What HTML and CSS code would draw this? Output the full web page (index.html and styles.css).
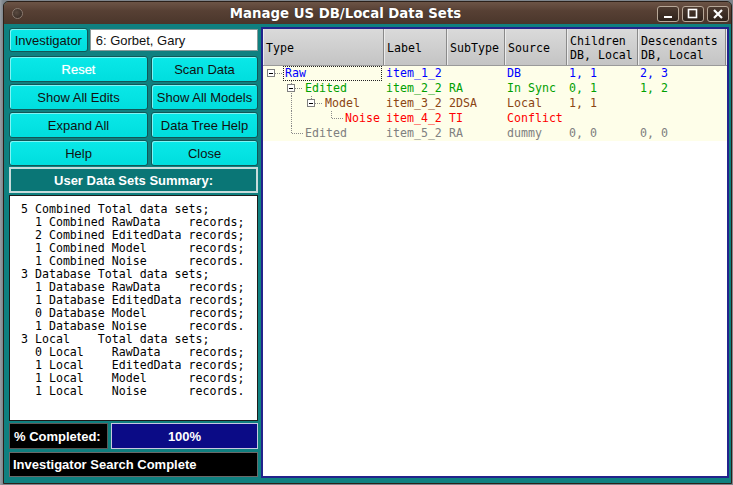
FILE: index.html
```html
<!DOCTYPE html>
<html>
<head>
<meta charset="utf-8">
<title>Manage US DB/Local Data Sets</title>
<link rel="stylesheet" href="styles.css">
</head>
<body>
<div class="window">
  <div class="titlebar">
    <div class="tb-left"><span class="tb-dot"></span></div>
    <div class="tb-title">Manage US DB/Local Data Sets</div>
    <div class="tb-btns">
      <span class="tb-btn"><svg width="22" height="16" viewBox="0 0 22 16"><rect x="7" y="10" width="8" height="2" fill="#fff"/></svg></span>
      <span class="tb-btn"><svg width="22" height="16" viewBox="0 0 22 16"><rect x="6.5" y="3.5" width="8" height="8" fill="none" stroke="#fff" stroke-width="1.6"/></svg></span>
      <span class="tb-btn"><svg width="22" height="16" viewBox="0 0 22 16"><path d="M7 4 L15 12 M15 4 L7 12" stroke="#fff" stroke-width="2.2"/></svg></span>
    </div>
  </div>
  <div class="content">
    <div class="left">
      <div class="inv-row">
        <div class="btn inv">Investigator</div>
        <div class="field">6: Gorbet, Gary</div>
      </div>
      <div class="btn-grid">
        <div class="btn reset">Reset</div>
        <div class="btn">Scan Data</div>
        <div class="btn">Show All Edits</div>
        <div class="btn">Show All Models</div>
        <div class="btn">Expand All</div>
        <div class="btn">Data Tree Help</div>
        <div class="btn">Help</div>
        <div class="btn">Close</div>
      </div>
      <div class="summary-label">User Data Sets Summary:</div>
<pre class="summary">5 Combined Total data sets;
  1 Combined RawData    records;
  2 Combined EditedData records;
  1 Combined Model      records;
  1 Combined Noise      records.
3 Database Total data sets;
  1 Database RawData    records;
  1 Database EditedData records;
  0 Database Model      records;
  1 Database Noise      records.
3 Local    Total data sets;
  0 Local    RawData    records;
  1 Local    EditedData records;
  1 Local    Model      records;
  1 Local    Noise      records.</pre>
      <div class="progress-row">
        <div class="prog-label">% Completed:</div>
        <div class="prog-bar">100%</div>
      </div>
      <div class="status">Investigator Search Complete</div>
    </div>
    <div class="tree">
      <div class="thead">
        <div class="th">Type</div>
        <div class="th">Label</div>
        <div class="th">SubType</div>
        <div class="th">Source</div>
        <div class="th two">Children<br>DB, Local</div>
        <div class="th two">Descendants<br>DB, Local</div>
        <div class="th last"></div>
      </div>
      <div class="tbody">
        <div class="trow c-raw">
          <div class="tcell type">
            <svg class="branch" width="20" height="15" viewBox="0 0 20 15">
              <path d="M12 7.5 H20" class="dot"/>
              <rect x="4.5" y="3.5" width="7" height="7" fill="#fff" stroke="#808080"/>
              <path d="M6 7.5 H10" stroke="#000"/>
            </svg>
            <span class="name focus">Raw</span>
          </div>
          <div class="tcell">item_1_2</div>
          <div class="tcell"></div>
          <div class="tcell">DB</div>
          <div class="tcell">1, 1</div>
          <div class="tcell">2, 3</div>
        </div>
        <div class="trow c-edit">
          <div class="tcell type">
            <svg class="branch" width="40" height="15" viewBox="0 0 40 15">
              <path d="M28.5 0 V15 M32 7.5 H40" class="dot"/>
              <rect x="24.5" y="3.5" width="7" height="7" fill="#fff" stroke="#808080"/>
              <path d="M26 7.5 H30" stroke="#000"/>
            </svg>
            <span class="name">Edited</span>
          </div>
          <div class="tcell">item_2_2</div>
          <div class="tcell">RA</div>
          <div class="tcell">In Sync</div>
          <div class="tcell">0, 1</div>
          <div class="tcell">1, 2</div>
        </div>
        <div class="trow c-model">
          <div class="tcell type">
            <svg class="branch" width="60" height="15" viewBox="0 0 60 15">
              <path d="M28.5 0 V15 M48.5 0 V4 M52 7.5 H60" class="dot"/>
              <rect x="44.5" y="3.5" width="7" height="7" fill="#fff" stroke="#808080"/>
              <path d="M46 7.5 H50" stroke="#000"/>
            </svg>
            <span class="name">Model</span>
          </div>
          <div class="tcell">item_3_2</div>
          <div class="tcell">2DSA</div>
          <div class="tcell">Local</div>
          <div class="tcell">1, 1</div>
          <div class="tcell"></div>
        </div>
        <div class="trow c-noise">
          <div class="tcell type">
            <svg class="branch" width="80" height="15" viewBox="0 0 80 15">
              <path d="M28.5 0 V15 M68.5 0 V7.5 H80" class="dot"/>
            </svg>
            <span class="name">Noise</span>
          </div>
          <div class="tcell">item_4_2</div>
          <div class="tcell">TI</div>
          <div class="tcell">Conflict</div>
          <div class="tcell"></div>
          <div class="tcell"></div>
        </div>
        <div class="trow c-dummy">
          <div class="tcell type">
            <svg class="branch" width="40" height="15" viewBox="0 0 40 15">
              <path d="M28.5 0 V7.5 H40" class="dot"/>
            </svg>
            <span class="name">Edited</span>
          </div>
          <div class="tcell">item_5_2</div>
          <div class="tcell">RA</div>
          <div class="tcell">dummy</div>
          <div class="tcell">0, 0</div>
          <div class="tcell">0, 0</div>
        </div>
      </div>
    </div>
  </div>
</div>
</body>
</html>
```

FILE: styles.css
```css
html, body {
  margin: 0;
  padding: 0;
}
body {
  width: 733px;
  height: 485px;
  overflow: hidden;
  background: linear-gradient(90deg, #9aa0a6 0px, #7e858c 3px);
  font-family: "Liberation Sans", Arial, sans-serif;
  font-size: 13px;
}
.window {
  margin: 1px 0 0 3px;
  width: 729px;
  height: 483px;
  box-sizing: border-box;
  border: 1px solid #2c2019;
  border-radius: 5px 5px 0 0;
  background: #0f8080;
  display: flex;
  flex-direction: column;
  overflow: hidden;
}
.titlebar {
  height: 22px;
  flex: none;
  display: flex;
  align-items: center;
  background: linear-gradient(#6c5446, #574034 40%, #4a362b);
  color: #fff;
}
.tb-left {
  width: 24px;
  display: flex;
  align-items: center;
  padding-left: 8px;
}
.tb-dot {
  width: 9px;
  height: 9px;
  border-radius: 50%;
  background: radial-gradient(circle at 40% 40%, #5a4a40, #2e241e);
  border: 1px solid #8a7a70;
}
.tb-title {
  flex: 1;
  text-align: center;
  font-family: "DejaVu Sans", sans-serif;
  font-weight: bold;
  font-size: 13.3px;
  padding-right: 2px;
  text-shadow: 0 0 1px #222;
}
.tb-btns {
  display: flex;
  gap: 3px;
  padding-right: 2px;
  margin-top: 1px;
}
.tb-btn {
  width: 20px;
  height: 14px;
  border: 1px solid #b8a898;
  border-radius: 3px;
  background: linear-gradient(#4c3a30, #2e221b);
  display: flex;
  align-items: center;
  justify-content: center;
  overflow: hidden;
}
.tb-btn svg {
  display: block;
  flex: none;
}
.content {
  flex: 1;
  display: flex;
  gap: 3px;
  padding: 3px 2px 5px 5px;
  min-height: 0;
}
.left {
  width: 249px;
  flex: none;
  margin-top: 1px;
  display: flex;
  flex-direction: column;
}
.inv-row {
  height: 24px;
  display: flex;
  align-items: center;
  gap: 2px;
}
.btn {
  box-sizing: border-box;
  background: linear-gradient(#0ae8e8, #00dede);
  border: 1px solid #125656;
  border-radius: 3px;
  display: flex;
  align-items: center;
  justify-content: center;
  color: #111;
  white-space: nowrap;
  box-shadow: inset 1px 1px 0 #7ff4f4;
}
.inv {
  width: 79px;
  height: 24px;
}
.field {
  box-sizing: border-box;
  width: 169px;
  height: 22px;
  background: #fff;
  border: 1px solid #8a9a9a;
  padding-left: 5px;
  display: flex;
  align-items: center;
  color: #111;
}
.btn-grid {
  margin-top: 4px;
  display: grid;
  grid-template-columns: 139px 107px;
  grid-auto-rows: 26px;
  column-gap: 3px;
  row-gap: 2px;
}
.btn.reset {
  color: #fff;
  text-shadow: 0 0 1px #9ff;
}
.summary-label {
  margin-top: 1px;
  height: 26px;
  box-sizing: border-box;
  background: #0a7676;
  border: 2px solid #c8dcdc;
  color: #fff;
  font-weight: bold;
  display: flex;
  align-items: center;
  justify-content: center;
}
.summary {
  margin: 2px 0 0 0;
  height: 226px;
  box-sizing: border-box;
  background: #fff;
  border: 1px solid #1c1c1c;
  padding: 7px 0 0 11px;
  font-family: "DejaVu Sans Mono", monospace;
  font-size: 11.6px;
  line-height: 13px;
  color: #000;
  overflow: hidden;
}
.progress-row {
  margin-top: 2px;
  height: 26px;
  display: flex;
  gap: 3px;
}
.prog-label {
  width: 99px;
  box-sizing: border-box;
  background: #000;
  border: 1px solid #5a5a5a;
  color: #fff;
  font-weight: bold;
  display: flex;
  align-items: center;
  padding-left: 4px;
}
.prog-bar {
  flex: 1;
  box-sizing: border-box;
  background: #0b0b86;
  border: 1px solid #c8c8e0;
  color: #fff;
  font-weight: bold;
  display: flex;
  align-items: center;
  justify-content: center;
}
.status {
  margin-top: 3px;
  height: 25px;
  box-sizing: border-box;
  background: #000;
  border: 1px solid #6a6a6a;
  color: #fff;
  font-weight: bold;
  display: flex;
  align-items: center;
  padding-left: 3px;
}
.tree {
  flex: 1;
  box-sizing: border-box;
  border: 2px solid #23238c;
  background: #fff;
  font-family: "DejaVu Sans Mono", monospace;
  font-size: 11.6px;
  overflow: hidden;
}
.thead {
  display: grid;
  grid-template-columns: 121px 63px 58px 62px 71px 88px 1fr;
  height: 36px;
  border-bottom: 1px solid #9a9a9a;
}
.th {
  box-sizing: border-box;
  background: linear-gradient(#dadada, #c4c4c4);
  border-right: 1px solid #8a8a8a;
  border-left: 1px solid #ececec;
  padding-left: 2px;
  padding-top: 1px;
  display: flex;
  align-items: center;
  line-height: 14px;
  color: #000;
  white-space: nowrap;
}
.th.last {
  border-right: none;
}
.tbody {
  background: #fff;
}
.trow {
  display: grid;
  grid-template-columns: 121px 63px 58px 62px 71px 88px;
  height: 15px;
  line-height: 15px;
  background: #fefee9;
  white-space: nowrap;
}
.tcell {
  padding-left: 2px;
  overflow: hidden;
}
.tcell.type {
  padding-left: 0;
  display: flex;
  align-items: stretch;
}
.branch {
  display: block;
  flex: none;
}
.branch .dot {
  fill: none;
  stroke: #8a8a8a;
  stroke-width: 1;
  stroke-dasharray: 1 1;
}
.name {
  padding-left: 2px;
}
.name.focus {
  flex: 1;
  margin-right: 2px;
  box-sizing: border-box;
  border: 1px dotted #222;
  padding-left: 1px;
  line-height: 13px;
}
.c-raw { color: #0000ff; }
.c-edit { color: #00a000; }
.c-model { color: #8b4513; }
.c-noise { color: #ff0000; }
.c-dummy { color: #808080; }
```
